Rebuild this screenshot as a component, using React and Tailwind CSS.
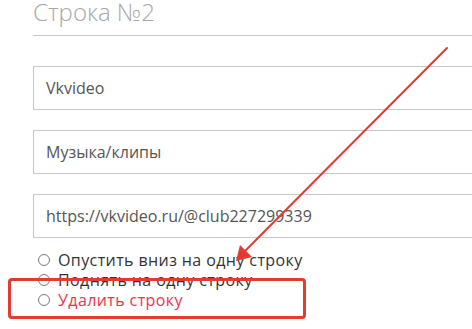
import React from "react";

const fields = ["Vkvideo", "Музыка/клипы", "https://vkvideo.ru/@club227299339"];
const options = [
  { label: "Опустить вниз на одну строку", red: false },
  { label: "Поднять на одну строку", red: false },
  { label: "Удалить строку", red: true },
];

function App() {
  return (
    <div className="relative w-[472px] h-[329px] overflow-hidden bg-white" style={{ fontFamily: "'Open Sans', 'Noto Sans', sans-serif" }}>
      <div className="pl-[33px]">
        <div className="w-[480px] h-[37px] border-b border-[#c8c8c8]">
          <div className="text-[24px] font-light leading-[26px] text-[#a8a8a8] -mt-[1px]">Строка №2</div>
        </div>

        <div className="flex flex-col gap-[20px] mt-[30px]">
          {fields.map((f) => (
            <div key={f} className="w-[480px] h-[44px] border border-[#c8c8c8] flex items-center pl-[12px] text-[16px] text-[#555]">
              {f}
            </div>
          ))}
        </div>

        <div className="flex flex-col mt-[12px]">
          {options.map((o) => (
            <label key={o.label} className="flex items-center h-[20px] gap-[8px] pl-[5px]">
              <span className="w-[12px] h-[12px] rounded-full border border-[#777] bg-white shrink-0"></span>
              <span className={`text-[16px] tracking-[0.4px] leading-[20px] ${o.red ? "text-[#f2304a]" : "text-[#333]"}`}>{o.label}</span>
            </label>
          ))}
        </div>
      </div>

      {/* annotation */}
      <div className="absolute left-[8px] top-[278px] w-[298px] h-[41px] border-[3px] border-[#e53a32] rounded-[4px]"></div>
      <svg className="absolute left-0 top-0" width="472" height="329" viewBox="0 0 472 329">
        <line x1="447" y1="48" x2="242" y2="254" stroke="#e53a32" strokeWidth="2" strokeLinecap="round" />
        <polygon points="236,261 240,245 252,257" fill="#e53a32" />
      </svg>
    </div>
  );
}

export default App;
